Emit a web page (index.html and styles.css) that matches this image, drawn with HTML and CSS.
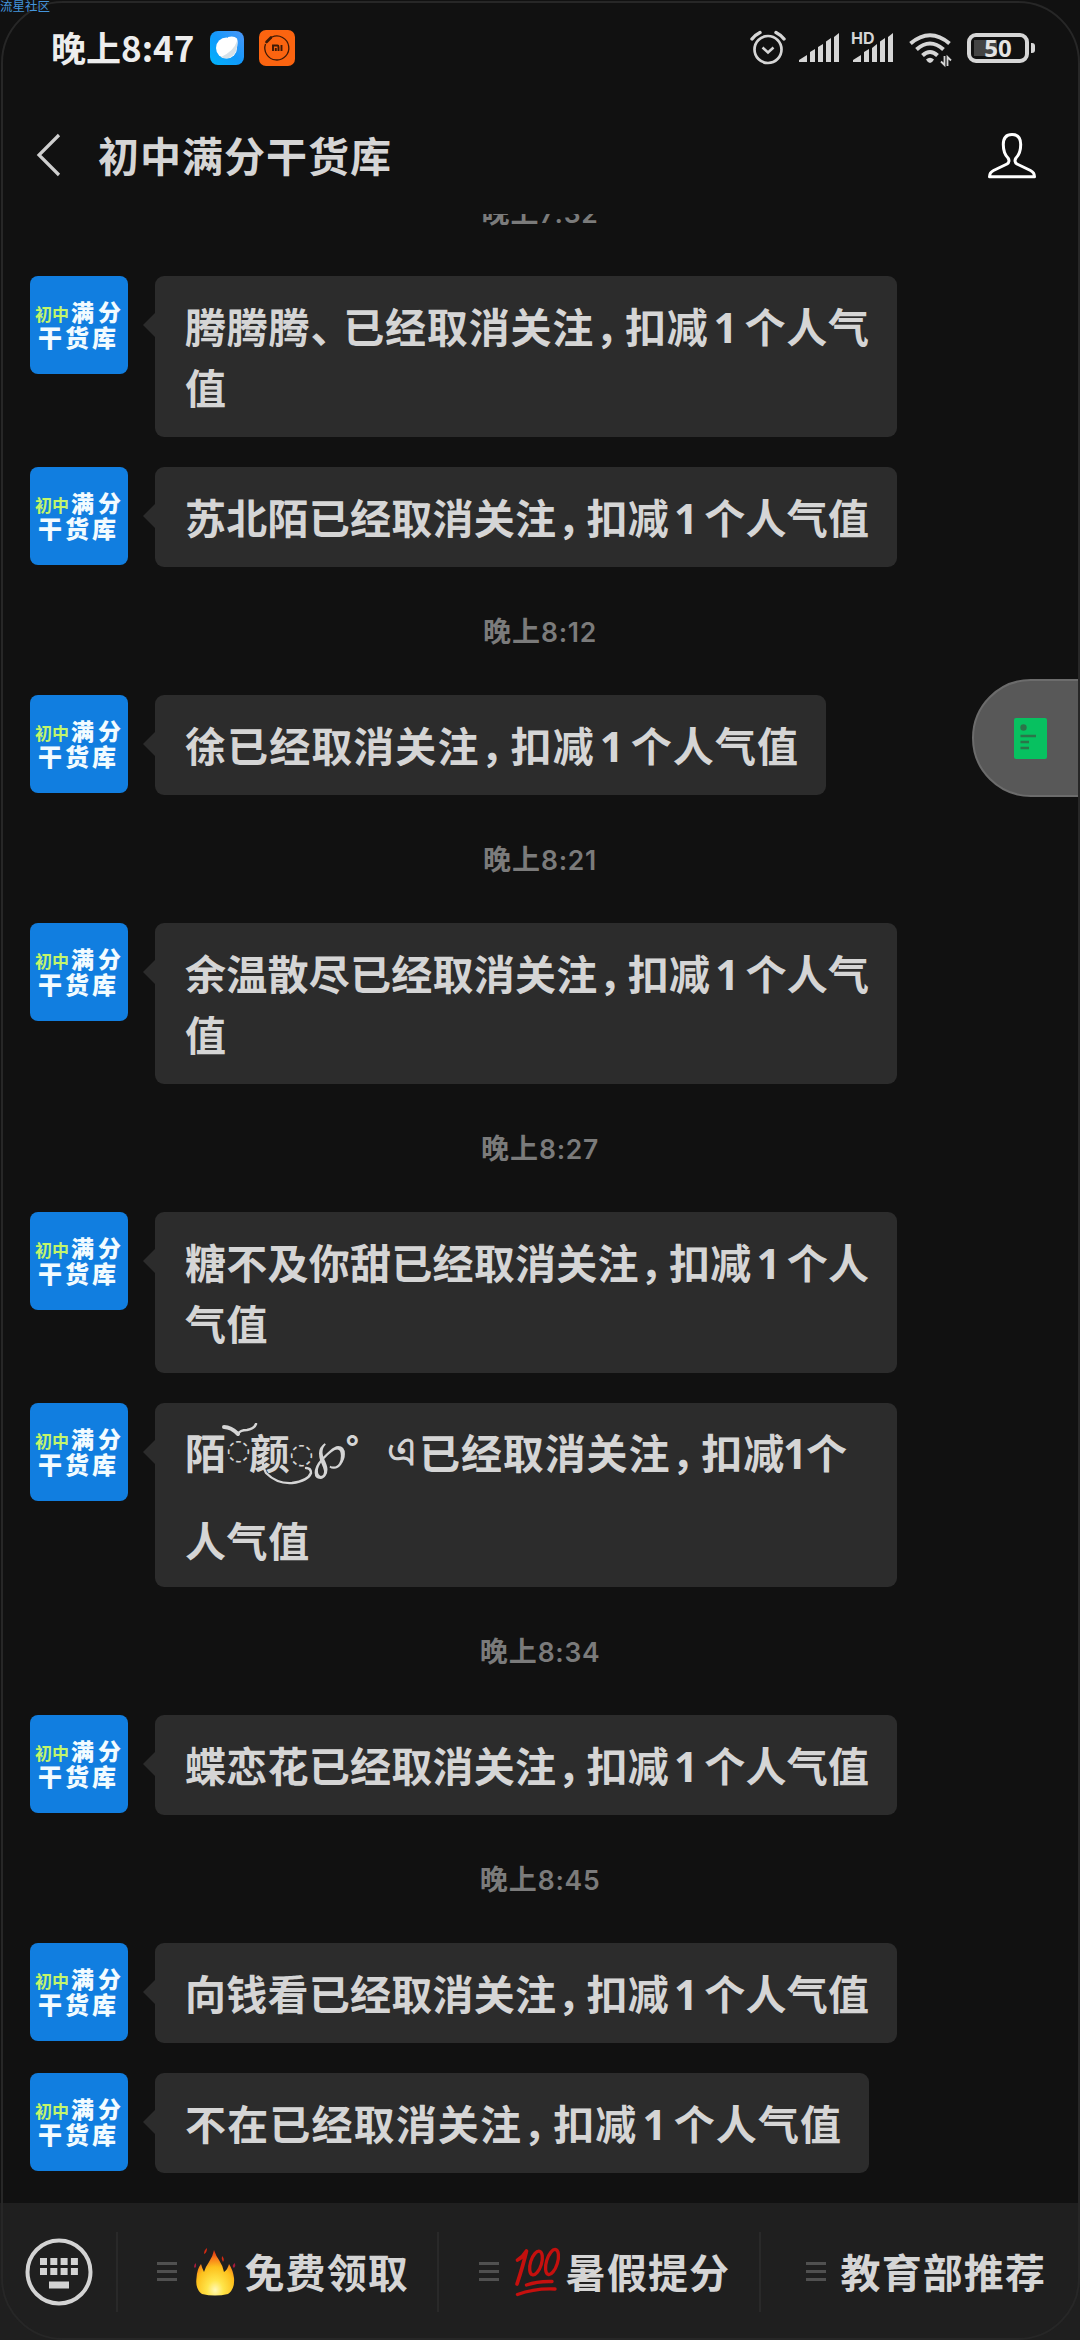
FILE: index.html
```
<!DOCTYPE html>
<html lang="zh-CN">
<head>
<meta charset="utf-8">
<title>初中满分干货库</title>
<link rel="stylesheet" href="styles.css">
</head>
<body>
<div class="screen">
  <header class="status">
    <span class="clock">晚上8:47</span>
    <svg class="app-browser" width="34" height="34" viewBox="0 0 34 34">
      <defs><linearGradient id="sky" x1="0" y1="1" x2="1" y2="0"><stop offset="0" stop-color="#00b4fb"/><stop offset=".5" stop-color="#1298fb"/><stop offset="1" stop-color="#4f97f7"/></linearGradient></defs>
      <rect width="34" height="34" rx="8" fill="url(#sky)"/>
      <circle cx="16.5" cy="17" r="10.5" fill="#fff"/>
      <path d="M18 6Q24 4.500 27 7.500Q28.500 12 26.500 18L20 24Z" fill="#fff"/>
      <path d="M27 10Q24 20 11 26Q14 28 19 27Q26 24 27 16Z" fill="#d7e1e8"/>
    </svg>
    <svg class="app-mi" width="36" height="36" viewBox="0 0 36 36">
      <rect width="36" height="36" rx="7" fill="#fb6410"/>
      <path d="M13 7A12 12 0 1 1 6.500 14" fill="none" stroke="#3d1a07" stroke-width="1.300"/>
      <path d="M7.500 12L12 7.500" stroke="#3d1a07" stroke-width="2.600" stroke-linecap="round"/>
      <path d="M14 21V15.500H18.500Q19.500 15.500 19.500 17V21M16.800 18V21M22.500 15V21" fill="none" stroke="#3d1a07" stroke-width="1.900"/>
    </svg>
    <div class="indicators">
      <svg width="36" height="36" viewBox="0 0 36 36" fill="none" stroke="#d6d6d6">
        <circle cx="18" cy="19.500" r="13.500" stroke-width="2.700"/>
        <path d="M12.500 17.500L18 22.500L23.500 17.500" stroke-width="2.500"/>
        <path d="M2 9Q5 5 10 2.500M34 9Q31 5 26 2.500" stroke-width="3.400" stroke-linecap="round"/>
      </svg>
      <svg class="sig" width="41" height="30" viewBox="0 0 41 30" fill="#d6d6d6">
        <path d="M0 29V27L8 22V29ZM11 29V19L16 16V29ZM19 29V14L24 11V29ZM27 29V8.500L32 5V29ZM35 29V4L40 0V29Z"/>
      </svg>
      <div class="hd">
        <svg width="41" height="30" viewBox="0 0 41 30" fill="#d6d6d6">
          <path d="M0 29V27L8 22V29ZM11 29V19L16 16V29ZM19 29V15L24 11V29ZM27 29V8.500L32 5V29ZM35 29V4L40 0V29Z"/>
        </svg>
        <span class="hd-text">HD</span>
      </div>
      <svg class="wifi" width="43" height="35" viewBox="0 0 43 35" fill="none" stroke="#d6d6d6">
        <path d="M1.500 10.500Q21 -6 40.500 10.500" stroke-width="4"/>
        <path d="M7.500 16.500Q21 4.500 34.500 16.500" stroke-width="4"/>
        <path d="M13.500 22.500Q21 15.500 28.500 22.500" stroke-width="4"/>
        <path d="M17 26.500Q21 23 25 26.500Q23 30 21 30Q19 30 17 26.500Z" fill="#d6d6d6" stroke="none"/>
        <path d="M35.500 23V32L32 28.500M38.500 33V24L42 27.500" stroke-width="1.800"/>
      </svg>
      <div class="battery"><span class="cell">50</span><i class="tip"></i></div>
    </div>
  </header>

  <nav class="titlebar">
    <svg width="26" height="44" viewBox="0 0 26 44"><path d="M23 2L3 22L23 42" fill="none" stroke="#cfcfcf" stroke-width="3.200"/></svg>
    <h1 class="title">初中满分干货库</h1>
    <svg class="person" width="48" height="46" viewBox="0 0 48 46"><path d="M24 1.500C17.500 1.500 15.300 6 15.300 11.500C15.300 18 17 22 20 25C21.500 27 21.300 29.500 19 31L5.500 37.500Q1.500 39.500 1.500 43.800H46.500Q46.500 39.500 42.500 37.500L29 31C26.700 29.500 26.500 27 28 25C31 22 32.700 18 32.700 11.500C32.700 6 30.500 1.500 24 1.500Z" fill="none" stroke="#fff" stroke-width="3" stroke-linejoin="round"/></svg>
  </nav>

  <main class="chat">
    <time class="time">晚上<span>7:32</span></time>
    <div class="msg"><div class="avatar"><p class="a1"><b>初中</b>满分</p><p class="a2">干货库</p></div>
      <div class="bubble"><p class="line">腾腾腾<span class="pause">、</span>已经取消关注<span class="comma">，</span>扣减<span class="num">1</span>个人气</p><p class="line end">值</p></div></div>
    <div class="msg"><div class="avatar"><p class="a1"><b>初中</b>满分</p><p class="a2">干货库</p></div>
      <div class="bubble"><p class="line">苏北陌已经取消关注<span class="comma">，</span>扣减<span class="num">1</span>个人气值</p></div></div>
    <time class="time">晚上<span>8:12</span></time>
    <div class="msg"><div class="avatar"><p class="a1"><b>初中</b>满分</p><p class="a2">干货库</p></div>
      <div class="bubble narrow"><p class="line">徐已经取消关注<span class="comma">，</span>扣减<span class="num">1</span>个人气值</p></div></div>
    <time class="time">晚上<span>8:21</span></time>
    <div class="msg"><div class="avatar"><p class="a1"><b>初中</b>满分</p><p class="a2">干货库</p></div>
      <div class="bubble"><p class="line">余温散尽已经取消关注<span class="comma">，</span>扣减<span class="num">1</span>个人气</p><p class="line end">值</p></div></div>
    <time class="time">晚上<span>8:27</span></time>
    <div class="msg"><div class="avatar"><p class="a1"><b>初中</b>满分</p><p class="a2">干货库</p></div>
      <div class="bubble"><p class="line">糖不及你甜已经取消关注<span class="comma">，</span>扣减<span class="num">1</span>个人</p><p class="line end">气值</p></div></div>
    <div class="msg"><div class="avatar"><p class="a1"><b>初中</b>满分</p><p class="a2">干货库</p></div>
      <div class="bubble fancy">
        <div class="name-line">
          <span class="g1">陌</span><span class="ring">◌</span><span class="g2">颜</span><span class="ring low">◌</span><span class="curl">℘</span><span class="deg">°</span><span class="beng">এ</span>
          <p class="line rest">已经取消关注<span class="comma">，</span>扣减<span class="num tight">1</span>个</p>
          <svg class="swash" width="110" height="70" viewBox="0 0 110 70" fill="none" stroke="#d5d5d5" stroke-linecap="round">
            <path d="M2 4Q9 4 16 11" stroke-width="4"/><path d="M16 11Q18 7 25 7Q32 6 34 1" stroke-width="2.500"/>
            <path d="M43 28Q38 40 44 50Q55 61 70 60Q86 58 89 50Q89 45 84 45" stroke-width="2.400"/>
          </svg>
        </div>
        <p class="line end">人气值</p></div></div>
    <time class="time">晚上<span>8:34</span></time>
    <div class="msg"><div class="avatar"><p class="a1"><b>初中</b>满分</p><p class="a2">干货库</p></div>
      <div class="bubble"><p class="line">蝶恋花已经取消关注<span class="comma">，</span>扣减<span class="num">1</span>个人气值</p></div></div>
    <time class="time">晚上<span>8:45</span></time>
    <div class="msg"><div class="avatar"><p class="a1"><b>初中</b>满分</p><p class="a2">干货库</p></div>
      <div class="bubble"><p class="line">向钱看已经取消关注<span class="comma">，</span>扣减<span class="num">1</span>个人气值</p></div></div>
    <div class="msg"><div class="avatar"><p class="a1"><b>初中</b>满分</p><p class="a2">干货库</p></div>
      <div class="bubble medium"><p class="line">不在已经取消关注<span class="comma">，</span>扣减<span class="num">1</span>个人气值</p></div></div>
  </main>

  <footer class="menu">
    <div class="keys">
      <svg width="68" height="68" viewBox="0 0 68 68">
        <circle cx="34" cy="34" r="31.500" fill="none" stroke="#d3d3d3" stroke-width="4"/>
        <path d="M15 20h7v7h-7zM25.300 20h7v7h-7zM35.600 20h7v7h-7zM45.900 20h7v7h-7zM15 30h7v7h-7zM25.300 30h7v7h-7zM35.600 30h7v7h-7zM45.900 30h7v7h-7zM24 43.500h20v7h-20z" fill="#d3d3d3"/>
      </svg>
    </div>
    <div class="item"><i class="bars"></i>
      <svg class="fire" width="42" height="48" viewBox="0 0 42 48">
        <defs><radialGradient id="flame" cx=".5" cy=".88" r=".85"><stop offset="0" stop-color="#fff8b8"/><stop offset=".25" stop-color="#ffe54a"/><stop offset=".6" stop-color="#fdc01c"/><stop offset=".82" stop-color="#f8791a"/><stop offset="1" stop-color="#d93212"/></radialGradient></defs>
        <path d="M8 46Q1 41 2.500 30Q3 21 7 16Q8 20 10 24Q12 18 15 14Q19 8 20 2Q22 8 25 12Q29 18 30 24Q34 21 35 16Q39 22 40 30Q41 41 34 46Q21 49 8 46Z" fill="url(#flame)"/>
        <path d="M10 6Q10 2 13 0Q13 5 10 6ZM29 14Q27 11 28 8Q31 11 29 14Z" fill="#d52a12"/>
        <path d="M0 19Q0 17 1.500 15Q3 18 1 20ZM39 19Q38 17 41 15Q42 18 40 20Z" fill="#a41c3c"/>
      </svg>
      <span class="label">免费领取</span></div>
    <div class="item"><i class="bars"></i>
      <svg class="hundred" width="47" height="50" viewBox="0 0 47 50" fill="none" stroke="#c5100e" stroke-linecap="round" stroke-linejoin="round">
        <path d="M3.500 13Q9 10 12.500 4Q9 19 3 37" stroke-width="3.700"/>
        <ellipse cx="22" cy="16" rx="5.500" ry="12.300" transform="rotate(17 22 16)" stroke-width="3.300"/>
        <ellipse cx="38" cy="15" rx="5.500" ry="13" transform="rotate(17 38 15)" stroke-width="3.300"/>
        <path d="M12.500 38Q24 34 38 34.500M3.500 47.500Q21 41 41 42" stroke-width="3.400"/>
      </svg>
      <span class="label">暑假提分</span></div>
    <div class="item"><i class="bars"></i><span class="label solo">教育部推荐</span></div>
  </footer>

  <div class="float">
    <svg width="33" height="41" viewBox="0 0 33 41"><rect width="33" height="41" rx="2" fill="#07c160"/><circle cx="9.500" cy="9.500" r="3.200" fill="#2b7549"/><path d="M6.500 18H22M6.500 24H15M6.500 30H15" stroke="#2b7549" stroke-width="2.600"/></svg>
  </div>
  <div class="edge"></div>
  <span class="mark">流星社区</span>
</div>
</body>
</html>
```
FILE: styles.css
```
* { box-sizing: border-box; margin: 0; padding: 0; }
body { background: #111; }
svg { display: block; flex: none; }

.screen {
  position: relative;
  width: 1080px;
  height: 2340px;
  overflow: hidden;
  display: flex;
  flex-direction: column;
  background: #111;
  color: #d5d5d5;
  font-family: "Noto Sans CJK SC", sans-serif;
  font-weight: 700;
}

.status { height: 96px; display: flex; align-items: center; padding: 0 45px 0 51px; }
.clock { width: 159px; font-size: 35px; line-height: 50px; color: #ededed; white-space: nowrap; padding-bottom: 2px; }
.app-mi { margin-left: 15px; }
.indicators { flex: 1; display: flex; align-items: center; justify-content: flex-end; }
.sig { margin-left: 13px; }
.hd { position: relative; margin-left: 13px; }
.hd-text { position: absolute; left: -2px; top: -3px; font: 700 16px/16px Inter, sans-serif; background: #111; height: 13px; }
.wifi { margin-left: 15px; margin-top: 4px; }
.battery { display: flex; align-items: center; margin-left: 15px; }
.cell {
  width: 62px; height: 30px;
  border: 4px solid #d6d6d6; border-radius: 9px;
  font: 700 24px/22px "Noto Sans", sans-serif; text-align: center; color: #e3e3e3;
  background: linear-gradient(90deg, #444 50%, transparent 50%) 3px 3px / 46px 16px no-repeat;
}
.tip { width: 4px; height: 10px; margin-left: 2px; border-radius: 0 3px 3px 0; background: #d6d6d6; }

.titlebar { height: 118px; display: flex; align-items: flex-start; padding: 37px 44px 0 36px; }
.title { flex: 1; padding-left: 36px; font-size: 41px; line-height: 44px; letter-spacing: 1px; font-weight: 700; margin-top: -1px; }

.chat { height: 1989px; overflow: hidden; display: flex; flex-direction: column; gap: 30px; }
.time { height: 68px; line-height: 67px; flex: none; text-align: center; font-size: 28px; letter-spacing: 1px; color: #7b7b7b; white-space: nowrap; }
.time span { font-family: Inter, sans-serif; font-weight: 600; font-size: 26.5px; letter-spacing: .7px; }
.time:first-child { margin-top: -36px; }
.msg { display: flex; align-items: flex-start; padding-left: 30px; gap: 27px; flex: none; }
.avatar {
  width: 98px; height: 98px; flex: none; border-radius: 8px; background: #117ee0; color: #f2fbff;
  padding: 22px 0 0 5px; white-space: nowrap;
}
.a1, .a2 { font-weight: 900; line-height: 26px; height: 26px; font-size: 24px; }
.a1 { font-size: 23px; letter-spacing: 4px; }
.a1 b { font-weight: 700; font-size: 17px; letter-spacing: 0; color: #c2f56c; margin-right: 2px; }
.a2 { letter-spacing: 3px; padding-left: 3px; }
.bubble {
  position: relative; width: 742px; padding: 18.5px 28px 20.5px 30px;
  border-radius: 9px; background: #2c2c2c;
}
.bubble::before {
  content: ""; position: absolute; left: -12px; top: 36px;
  border: 13px solid transparent; border-left: 0; border-right: 13px solid #2c2c2c;
}
.narrow { width: 671px; }
.medium { width: 714px; }
.line { height: 61px; line-height: 61px; font-size: 41px; text-align: justify; text-align-last: justify; white-space: nowrap; }
.end { text-align-last: left; letter-spacing: .6px; }
.comma { letter-spacing: -12px; margin-left: 1px; }
.pause { letter-spacing: -9px; }
.num { margin: 0 6px 0 5px; font-family: "Noto Sans", sans-serif; font-size: 42px; line-height: 1; }
.name-line .num.tight { margin: 0 -2px; }

.fancy { height: 184px; padding-top: 17.5px; }
.name-line { position: relative; display: flex; height: 88px; font-size: 41px; line-height: 61px; white-space: nowrap; }
.name-line span { flex: none; }
.g1 { width: 43px; }
.ring { width: 21px; font: 400 28px/57px "DejaVu Sans", sans-serif; display: flex; justify-content: center; }
.low { line-height: 65px; }
.g2 { width: 42px; }
.curl { width: 33px; font: 400 50px/60px "DejaVu Sans", sans-serif; }
.deg { width: 42px; font: 600 32px/54px Inter, sans-serif; }
.beng { width: 32px; font: 400 40px/60px sans-serif; -webkit-text-stroke: 1px #d5d5d5; }
.name-line .rest { width: 428px; flex: none; }
.swash { position: absolute; left: 37px; top: 2px; }

.menu { height: 137px; display: flex; align-items: center; background: #1f1f1f; }
.keys { width: 116px; padding-left: 25px; }
.item { width: 321.33px; height: 80px; display: flex; align-items: center; justify-content: center; border-left: 2px solid #292929; padding-left: 10px; }
.bars { width: 20px; height: 19px; background: linear-gradient(#505050 3px, transparent 3px) 0 0 / 20px 8px; }
.fire { margin-left: 17px; margin-right: 8px; }
.hundred { margin-left: 15px; margin-right: 5px; }
.label { font-size: 40px; line-height: 60px; letter-spacing: 1.1px; margin-right: -1px; padding-bottom: 2px; white-space: nowrap; }
.solo { margin-left: 15px; }

.float {
  position: absolute; left: 972px; top: 679px; width: 110px; height: 118px;
  display: flex; align-items: center; padding-left: 40px;
  border: 2px solid #6c6c6c; border-radius: 59px 0 0 59px; background: #585858;
}
.edge { position: absolute; inset: 1px 0 0 1px; border: 2px solid #272727; border-radius: 62px; pointer-events: none; }
.mark { position: absolute; left: 0; top: -3px; font-size: 12.5px; line-height: 18px; font-weight: 400; color: #4495dc; }
```
